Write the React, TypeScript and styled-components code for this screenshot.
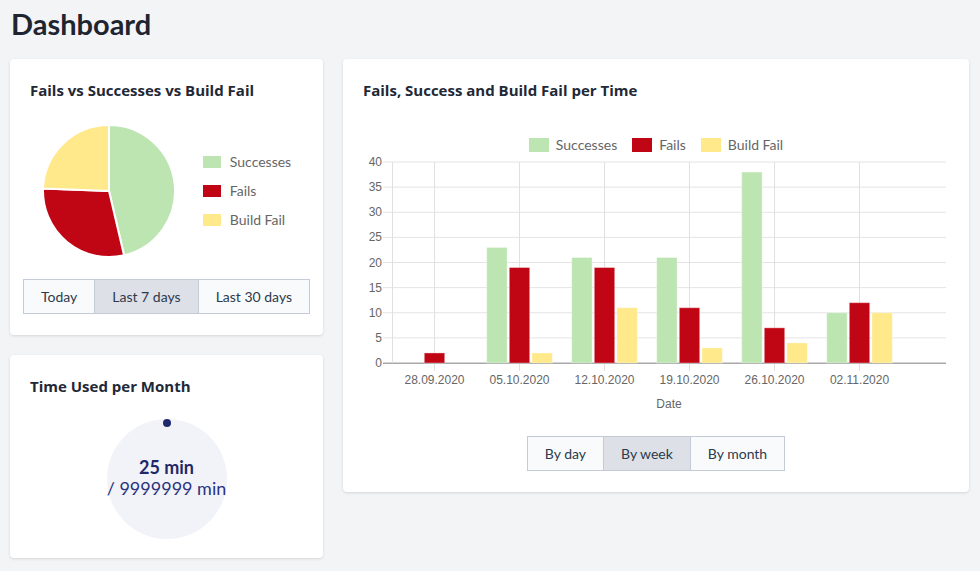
import React from "react";
import styled, { createGlobalStyle } from "styled-components";

const GREEN = "#bde5b2";
const RED = "#c00614";
const YELLOW = "#ffe98a";

const GlobalStyle = createGlobalStyle`
  body {
    margin: 0;
    background: #f3f4f6;
    font-family: Lato, "Open Sans", sans-serif;
    color: #222836;
  }
`;

const Page = styled.main`
  padding: 4px 11px 20px 10px;
`;

const PageTitle = styled.h1`
  margin: 0 0 15px 1px;
  font-size: 29px;
  line-height: 40px;
  font-weight: 700;
  color: #1e2530;
`;

const Grid = styled.div`
  display: grid;
  grid-template-columns: 313px 626px;
  gap: 20px;
  align-items: start;
`;

const Column = styled.div`
  display: flex;
  flex-direction: column;
  gap: 20px;
`;

const Card = styled.section<{ $padX?: number; $padBottom?: number }>`
  background: #fff;
  border-radius: 4px;
  box-shadow: 0 1px 3px rgba(0, 0, 0, 0.12);
  padding: 21px ${(p) => p.$padX ?? 20}px ${(p) => p.$padBottom ?? 21}px;
`;

const CardTitle = styled.h2<{ $inset?: number }>`
  margin: 0 ${(p) => p.$inset ?? 0}px;
  font-family: "Open Sans", Lato, sans-serif;
  font-size: 15px;
  line-height: 20px;
  font-weight: 700;
  color: #222836;
`;

const PieRow = styled.div`
  display: flex;
  align-items: center;
  justify-content: center;
  gap: 27px;
  margin-top: 24px;
`;

const LegendList = styled.ul`
  list-style: none;
  margin: 0;
  padding: 0;
  display: flex;
  flex-direction: column;
  gap: 11px;
`;

const LegendItem = styled.li`
  display: flex;
  align-items: center;
  gap: 9px;
  font-size: 14px;
  line-height: 18px;
  color: #666;
`;

const Swatch = styled.span<{ $color: string; $w: number; $h: number }>`
  display: inline-block;
  width: ${(p) => p.$w}px;
  height: ${(p) => p.$h}px;
  background: ${(p) => p.$color};
`;

const ButtonGroup = styled.div<{ $top: number }>`
  display: flex;
  justify-content: center;
  margin-top: ${(p) => p.$top}px;
`;

const GroupButton = styled.button<{ $active?: boolean }>`
  flex-shrink: 0;
  height: 35px;
  padding: 0 17px;
  white-space: nowrap;
  font-family: Lato, "Open Sans", sans-serif;
  font-size: 14px;
  color: #2c3a4c;
  background: ${(p) => (p.$active ? "#dde1e7" : "#f8fafc")};
  border: 1px solid #c3cbd6;
  margin-left: -1px;
  cursor: pointer;
  &:first-child {
    margin-left: 0;
  }
`;

const RingWrap = styled.div`
  display: grid;
  place-items: center;
  width: 120px;
  height: 120px;
  margin: 23px auto 0;
  & > * {
    grid-area: 1 / 1;
  }
`;

const RingText = styled.div`
  text-align: center;
  color: #2b3480;
  font-size: 18px;
  line-height: 21px;
  margin-top: -2px;
`;

const RingValue = styled.div`
  font-weight: 700;
  color: #1f2868;
`;

const ChartLegend = styled.div`
  display: flex;
  justify-content: center;
  gap: 15px;
  margin-top: 37px;
  height: 16px;
`;

const ChartLegendItem = styled.div`
  display: flex;
  align-items: center;
  gap: 7px;
  font-size: 14px;
  line-height: 16px;
  color: #666;
`;

const ChartSvg = styled.svg`
  display: block;
  margin-top: 3px;
  font-family: "Liberation Sans", Arial, sans-serif;
`;

const series = [
  { label: "Successes", color: GREEN },
  { label: "Fails", color: RED },
  { label: "Build Fail", color: YELLOW },
];

const pieValues = [19, 12, 10];

function PieChart() {
  const cx = 67;
  const cy = 67;
  const r = 66;
  const total = pieValues.reduce((a, b) => a + b, 0);
  let start = 0;
  const pt = (a: number) => [cx + r * Math.sin(a), cy - r * Math.cos(a)];
  return (
    <svg width={134} height={134} viewBox="0 0 134 134">
      {pieValues.map((v, i) => {
        const end = start + (v / total) * Math.PI * 2;
        const [x1, y1] = pt(start);
        const [x2, y2] = pt(end);
        const large = end - start > Math.PI ? 1 : 0;
        const d = `M${cx} ${cy} L${x1} ${y1} A${r} ${r} 0 ${large} 1 ${x2} ${y2} Z`;
        start = end;
        return <path key={i} d={d} fill={series[i].color} stroke="#fff" strokeWidth={2} />;
      })}
    </svg>
  );
}

const barData = [
  { date: "28.09.2020", values: [0, 2, 0] },
  { date: "05.10.2020", values: [23, 19, 2] },
  { date: "12.10.2020", values: [21, 19, 11] },
  { date: "19.10.2020", values: [21, 11, 3] },
  { date: "26.10.2020", values: [38, 7, 4] },
  { date: "02.11.2020", values: [10, 12, 10] },
];

function BarChart() {
  const left = 29;
  const right = 583;
  const top = 6;
  const zero = 207;
  const unit = (zero - top) / 40;
  const ticks = [40, 35, 30, 25, 20, 15, 10, 5, 0];
  const catX = (i: number) => 71.5 + 85 * i;
  return (
    <ChartSvg width={586} height={260} viewBox="0 0 586 260">
      {ticks.map((t) => {
        const y = zero - t * unit;
        return (
          <g key={t}>
            <line x1={20} x2={right} y1={y} y2={y} stroke={t === 0 ? "#a9a9a9" : "#e4e4e4"} />
            <text x={19} y={y + 4} fontSize={12} fill="#666" textAnchor="end">
              {t}
            </text>
          </g>
        );
      })}
      <line x1={left + 0.5} x2={left + 0.5} y1={top} y2={zero} stroke="#e0e0e0" />
      {barData.map((d, i) => (
        <line
          key={d.date}
          x1={catX(i)}
          x2={catX(i)}
          y1={top}
          y2={zero + 8}
          stroke="#e0e0e0"
        />
      ))}
      <line x1={20} x2={right} y1={zero + 0.5} y2={zero + 0.5} stroke="#a9a9a9" />
      {barData.map((d, i) =>
        d.values.map((v, j) => {
          if (!v) return null;
          const h = v * unit;
          const x = catX(i) + (j - 1) * 22.6 - 10.2;
          return (
            <rect
              key={`${i}-${j}`}
              x={x}
              y={zero - h}
              width={20.4}
              height={h}
              fill={series[j].color}
              stroke="rgba(255,255,255,0.35)"
              strokeWidth={1}
            />
          );
        })
      )}
      {barData.map((d, i) => (
        <text key={d.date} x={catX(i)} y={228} fontSize={12} fill="#666" textAnchor="middle">
          {d.date}
        </text>
      ))}
      <text x={(left + right) / 2} y={252} fontSize={12} fill="#666" textAnchor="middle">
        Date
      </text>
    </ChartSvg>
  );
}

function Ring() {
  return (
    <RingWrap>
      <svg width={120} height={120} viewBox="0 0 120 120">
        <circle cx={60} cy={60} r={60} fill="#f2f3f9" />
        <circle cx={60} cy={4} r={4} fill="#1f2a6e" />
      </svg>
      <RingText>
        <RingValue>25 min</RingValue>
        <div>/ 9999999 min</div>
      </RingText>
    </RingWrap>
  );
}

export default function App() {
  return (
    <>
      <GlobalStyle />
      <Page>
        <PageTitle>Dashboard</PageTitle>
        <Grid>
          <Column>
            <Card $padX={12}>
              <CardTitle $inset={8}>Fails vs Successes vs Build Fail</CardTitle>
              <PieRow>
                <PieChart />
                <LegendList>
                  {series.map((s) => (
                    <LegendItem key={s.label}>
                      <Swatch $color={s.color} $w={18} $h={12} />
                      {s.label}
                    </LegendItem>
                  ))}
                </LegendList>
              </PieRow>
              <ButtonGroup $top={21}>
                <GroupButton>Today</GroupButton>
                <GroupButton $active>Last 7 days</GroupButton>
                <GroupButton>Last 30 days</GroupButton>
              </ButtonGroup>
            </Card>
            <Card $padBottom={19}>
              <CardTitle>Time Used per Month</CardTitle>
              <Ring />
            </Card>
          </Column>
          <Card>
            <CardTitle>Fails, Success and Build Fail per Time</CardTitle>
            <ChartLegend>
              {series.map((s) => (
                <ChartLegendItem key={s.label}>
                  <Swatch $color={s.color} $w={20} $h={14} />
                  {s.label}
                </ChartLegendItem>
              ))}
            </ChartLegend>
            <BarChart />
            <ButtonGroup $top={20}>
              <GroupButton>By day</GroupButton>
              <GroupButton $active>By week</GroupButton>
              <GroupButton>By month</GroupButton>
            </ButtonGroup>
          </Card>
        </Grid>
      </Page>
    </>
  );
}
